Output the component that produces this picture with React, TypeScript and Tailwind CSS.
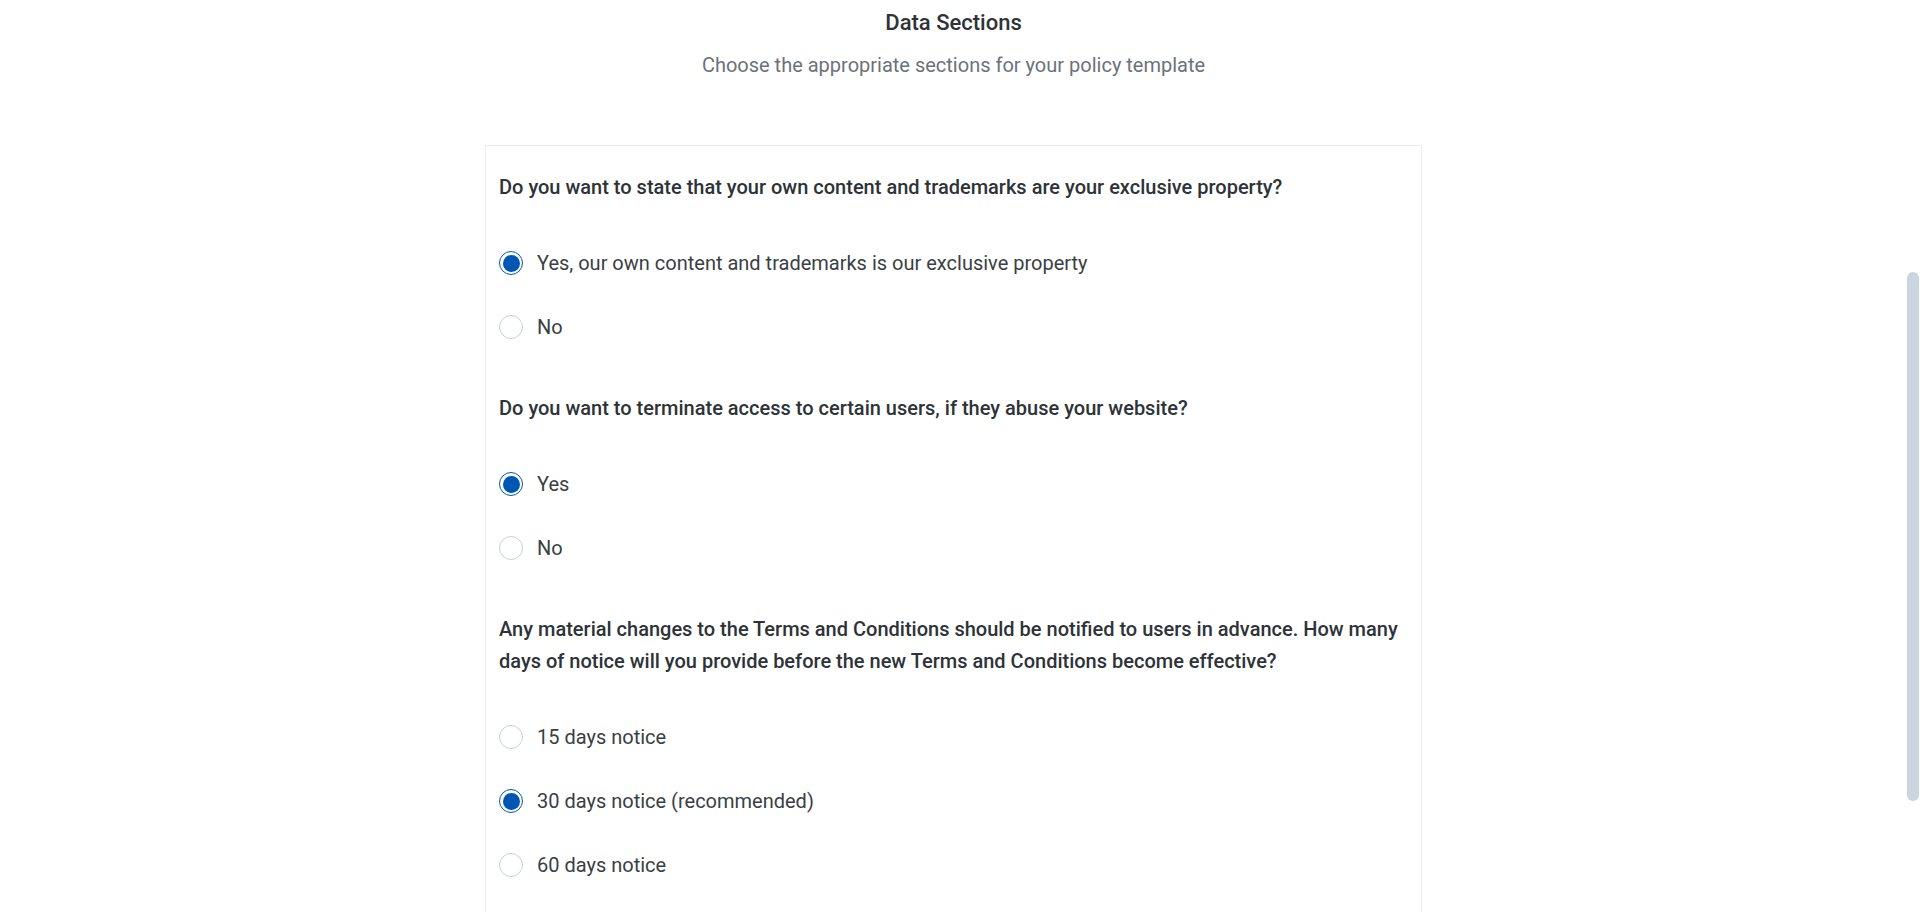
import React, { useState } from 'react'

type Question = {
  id: string
  label: string
  options: string[]
  initial: number
}

const questions: Question[] = [
  {
    id: 'ownership',
    label: 'Do you want to state that your own content and trademarks are your exclusive property?',
    options: ['Yes, our own content and trademarks is our exclusive property', 'No'],
    initial: 0,
  },
  {
    id: 'terminate',
    label: 'Do you want to terminate access to certain users, if they abuse your website?',
    options: ['Yes', 'No'],
    initial: 0,
  },
  {
    id: 'notice',
    label:
      'Any material changes to the Terms and Conditions should be notified to users in advance. How many days of notice will you provide before the new Terms and Conditions become effective?',
    options: ['15 days notice', '30 days notice (recommended)', '60 days notice'],
    initial: 1,
  },
]

function Radio({ checked }: { checked: boolean }) {
  return checked ? (
    <span className="flex h-6 w-6 shrink-0 items-center justify-center rounded-full border-[1.5px] border-[#0057b3] bg-white">
      <span className="h-[17px] w-[17px] rounded-full bg-[#0057b3]" />
    </span>
  ) : (
    <span className="h-6 w-6 shrink-0 rounded-full border border-[#c6cfd8] bg-white" />
  )
}

export default function App() {
  const [answers, setAnswers] = useState<Record<string, number>>(
    Object.fromEntries(questions.map((q) => [q.id, q.initial])),
  )

  return (
    <div className="flex h-[912px] overflow-hidden bg-white font-['Roboto',sans-serif]">
      <main className="flex flex-1 flex-col items-center">
        <h2 className="mt-[9px] text-[22px] font-medium leading-[28px] text-[#2f3337]">Data Sections</h2>
        <p className="mt-[15px] text-[20px] leading-[26px] text-[#6c727a]">
          Choose the appropriate sections for your policy template
        </p>

        <div className="mt-[67px] w-[937px] border border-[#ececec] px-[13px] pt-[25px]">
          {questions.map((q) => (
            <div key={q.id} className="mb-[33px]">
              <p className="mb-[28px] text-[20px] font-medium leading-[32px] text-[#2d3338]">{q.label}</p>
              {q.options.map((option, i) => {
                const checked = answers[q.id] === i
                return (
                  <label
                    key={option}
                    className="flex h-16 cursor-pointer items-center gap-[14px]"
                    onClick={() => setAnswers({ ...answers, [q.id]: i })}
                  >
                    <Radio checked={checked} />
                    <span className="text-[20px] leading-[26px] text-[#3a3f45]">{option}</span>
                  </label>
                )
              })}
            </div>
          ))}
        </div>
      </main>

      <aside className="w-[13px] shrink-0 pt-[272px]">
        <div className="h-[529px] w-[12px] rounded-full bg-[#c9d5df]" />
      </aside>
    </div>
  )
}
